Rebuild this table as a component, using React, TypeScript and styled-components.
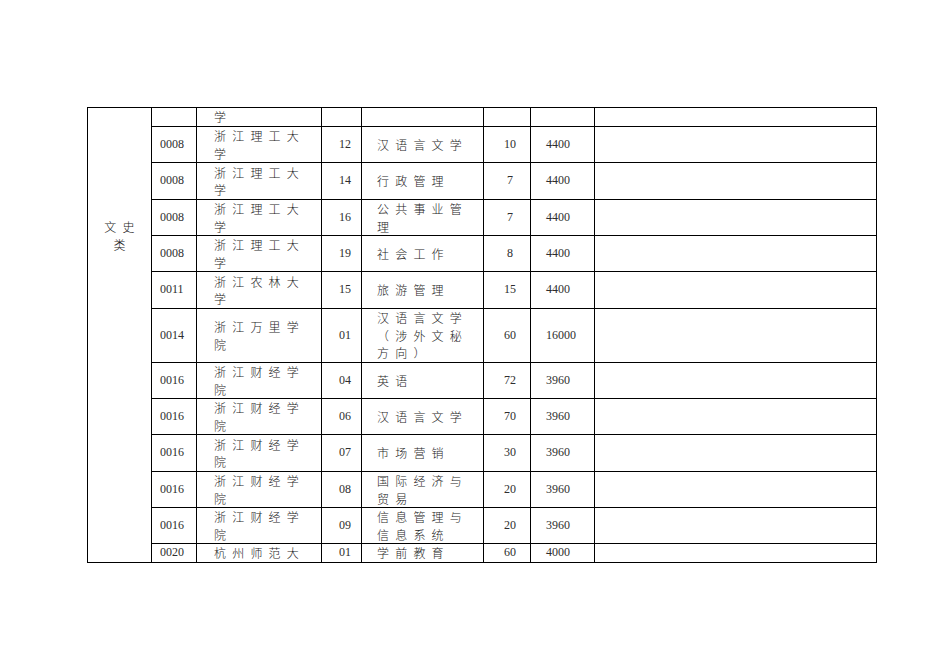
import React from "react";
import styled, { createGlobalStyle } from "styled-components";

const Global = createGlobalStyle`
  html, body {
    margin: 0;
    padding: 0;
    background: #fff;
  }
`;

type Row = {
  code: string;
  school: string[];
  mcode: string;
  major: string[];
  count: string;
  fee: string;
  h: number;
};

const rows: Row[] = [
  { code: "", school: ["学"], mcode: "", major: [], count: "", fee: "", h: 19 },
  { code: "0008", school: ["浙江理工大", "学"], mcode: "12", major: ["汉语言文学"], count: "10", fee: "4400", h: 36 },
  { code: "0008", school: ["浙江理工大", "学"], mcode: "14", major: ["行政管理"], count: "7", fee: "4400", h: 37 },
  { code: "0008", school: ["浙江理工大", "学"], mcode: "16", major: ["公共事业管", "理"], count: "7", fee: "4400", h: 36 },
  { code: "0008", school: ["浙江理工大", "学"], mcode: "19", major: ["社会工作"], count: "8", fee: "4400", h: 36 },
  { code: "0011", school: ["浙江农林大", "学"], mcode: "15", major: ["旅游管理"], count: "15", fee: "4400", h: 37 },
  { code: "0014", school: ["浙江万里学", "院"], mcode: "01", major: ["汉语言文学", "（涉外文秘", "方向）"], count: "60", fee: "16000", h: 54 },
  { code: "0016", school: ["浙江财经学", "院"], mcode: "04", major: ["英语"], count: "72", fee: "3960", h: 36 },
  { code: "0016", school: ["浙江财经学", "院"], mcode: "06", major: ["汉语言文学"], count: "70", fee: "3960", h: 36 },
  { code: "0016", school: ["浙江财经学", "院"], mcode: "07", major: ["市场营销"], count: "30", fee: "3960", h: 37 },
  { code: "0016", school: ["浙江财经学", "院"], mcode: "08", major: ["国际经济与", "贸易"], count: "20", fee: "3960", h: 36 },
  { code: "0016", school: ["浙江财经学", "院"], mcode: "09", major: ["信息管理与", "信息系统"], count: "20", fee: "3960", h: 36 },
  { code: "0020", school: ["杭州师范大"], mcode: "01", major: ["学前教育"], count: "60", fee: "4000", h: 19 },
];

const cols = [64, 45, 125, 40, 122, 47, 64, 282];

const Page = styled.div`
  padding: 107px 0 0 87px;
  width: 950px;
  height: 672px;
  box-sizing: border-box;
  font-family: "Liberation Serif", "Noto Sans CJK SC", serif;
  font-size: 12px;
  color: #2e2e2e;
`;

const Sheet = styled.table`
  border-collapse: collapse;
  table-layout: fixed;
  width: 790px;
  border: 1px solid #000;
`;

const Tr = styled.tr<{ $h: number }>`
  height: ${(p) => p.$h}px;
`;

const Cell = styled.td<{ $align?: string; $pad?: number }>`
  border: 1px solid #000;
  padding: 0 0 0 ${(p) => p.$pad ?? 0}px;
  text-align: ${(p) => p.$align ?? "left"};
  vertical-align: middle;
  line-height: 17.5px;
  white-space: nowrap;
  overflow: hidden;
`;

const CategoryCell = styled(Cell)`
  vertical-align: top;
  text-align: center;
  padding: 110px 0 0 0;
  line-height: 18px;
`;

const Line = styled.div<{ $spaced?: boolean }>`
  font-family: "Noto Sans CJK SC", sans-serif;
  font-weight: 300;
  color: #1c1c1c;
  letter-spacing: ${(p) => (p.$spaced ? "6.2px" : "0")};
`;

const Lines = ({ items }: { items: string[] }) => (
  <>
    {items.map((t, i) => (
      <Line key={i} $spaced>
        {t}
      </Line>
    ))}
  </>
);

export default function App() {
  return (
    <Page>
      <Global />
      <Sheet>
        <colgroup>
          {cols.map((w, i) => (
            <col key={i} style={{ width: w }} />
          ))}
        </colgroup>
        <tbody>
          {rows.map((r, i) => (
            <Tr key={i} $h={r.h}>
              {i === 0 && (
                <CategoryCell rowSpan={rows.length}>
                  <Line $spaced style={{ paddingLeft: 6 }}>文史</Line>
                  <Line>类</Line>
                </CategoryCell>
              )}
              <Cell $pad={8}>{r.code}</Cell>
              <Cell $pad={17}>
                <Lines items={r.school} />
              </Cell>
              <Cell $align="center" $pad={7}>{r.mcode}</Cell>
              <Cell $pad={15}>
                <Lines items={r.major} />
              </Cell>
              <Cell $align="center" $pad={6}>{r.count}</Cell>
              <Cell $pad={15}>{r.fee}</Cell>
              <Cell />
            </Tr>
          ))}
        </tbody>
      </Sheet>
    </Page>
  );
}
